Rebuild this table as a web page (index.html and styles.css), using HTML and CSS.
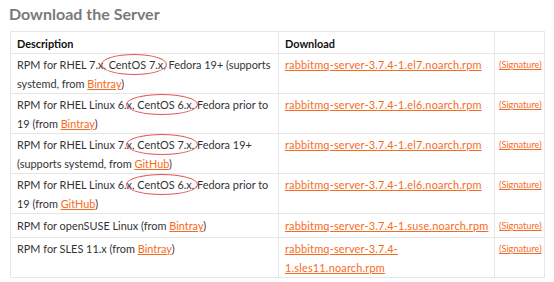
FILE: index.html
```html
<!DOCTYPE html>
<html>
	<head>
		<meta charset="UTF-8">
		<title>Download the Server</title>
		<link rel="stylesheet" href="styles.css">
	</head>
	<body>
		<h2 class="title">Download the Server</h2>
		<table class="downloads">
			<thead>
				<tr>
					<th class="desc">Description</th>
					<th class="file">Download</th>
					<th class="sig"></th>
				</tr>
			</thead>
			<tbody>
				<tr>
					<td>RPM for RHEL 7.x, <span class="mark m1">CentOS 7.x</span>, Fedora 19+ (supports systemd, from <a href="#">Bintray</a>)</td>
					<td class="file"><a class="pkg" href="#">rabbitmq-server-3.7.4-1.el7.noarch.rpm</a></td>
					<td class="sig"><a href="#">(Signature)</a></td>
				</tr>
				<tr>
					<td>RPM for RHEL Linux 6.x, <span class="mark m2">CentOS 6.x</span>, Fedora prior to 19 (from <a href="#">Bintray</a>)</td>
					<td class="file"><a class="pkg" href="#">rabbitmq-server-3.7.4-1.el6.noarch.rpm</a></td>
					<td class="sig"><a href="#">(Signature)</a></td>
				</tr>
				<tr>
					<td>RPM for RHEL Linux 7.x, <span class="mark m3">CentOS 7.x</span>, Fedora 19+ (supports systemd, from <a href="#">GitHub</a>)</td>
					<td class="file"><a class="pkg" href="#">rabbitmq-server-3.7.4-1.el7.noarch.rpm</a></td>
					<td class="sig"><a href="#">(Signature)</a></td>
				</tr>
				<tr>
					<td>RPM for RHEL Linux 6.x, <span class="mark m4">CentOS 6.x</span>, Fedora prior to 19 (from <a href="#">GitHub</a>)</td>
					<td class="file"><a class="pkg" href="#">rabbitmq-server-3.7.4-1.el6.noarch.rpm</a></td>
					<td class="sig"><a href="#">(Signature)</a></td>
				</tr>
				<tr class="short">
					<td>RPM for openSUSE Linux (from <a href="#">Bintray</a>)</td>
					<td class="file"><a class="pkg" href="#">rabbitmq-server-3.7.4-1.suse.noarch.rpm</a></td>
					<td class="sig"><a href="#">(Signature)</a></td>
				</tr>
				<tr>
					<td>RPM for SLES 11.x (from <a href="#">Bintray</a>)</td>
					<td class="file"><a class="pkg" href="#">rabbitmq-server-3.7.4-1.sles11.noarch.rpm</a></td>
					<td class="sig"><a href="#">(Signature)</a></td>
				</tr>
			</tbody>
		</table>
	</body>
</html>
```

FILE: styles.css
```css
body{
	margin: 0;
	padding: 0 9px 0 10px;
	background: #fff;
	font-family: Lato, "Open Sans", sans-serif;
	color: #333;
}
.title{
	margin: 3px 0 0 -1px;
	height: 28px;
	font-size: 16px;
	font-weight: bold;
	color: #7a7a7a;
	line-height: 22px;
}
.downloads{
	width: 535px;
	border-collapse: collapse;
	table-layout: fixed;
	font-size: 10.9px;
}
.downloads th,
.downloads td{
	border: 1px solid #e6e6e6;
	padding: 1px 5px 0 6px;
	line-height: 19px;
	text-align: left;
	vertical-align: top;
}
.downloads th{
	height: 19px;
	font-weight: bold;
	color: #111;
	padding-top: 2px;
}
.desc{
	width: 256px;
}
.downloads .file{
	width: 207px;
	padding-right: 2px;
}
.downloads tr.short td{
	height: 21px;
	padding-top: 2px;
}
.downloads a{
	color: #f76b1c;
	text-decoration: underline;
}
.downloads a.pkg{
	letter-spacing: 0.2px;
}
.downloads td.sig{
	padding-left: 4px;
	padding-right: 3px;
	font-size: 9.2px;
}
/* hand-drawn red rings round the CentOS versions */
.mark{
	position: relative;
}
.mark::after{
	content: "";
	position: absolute;
	border: 1px solid #e0585c;
	border-radius: 50%;
	top: -4px;
	bottom: -4px;
	left: -8px;
	right: -4px;
}
.m2::after,
.m3::after,
.m4::after{
	left: -11px;
	right: -6px;
}
```
